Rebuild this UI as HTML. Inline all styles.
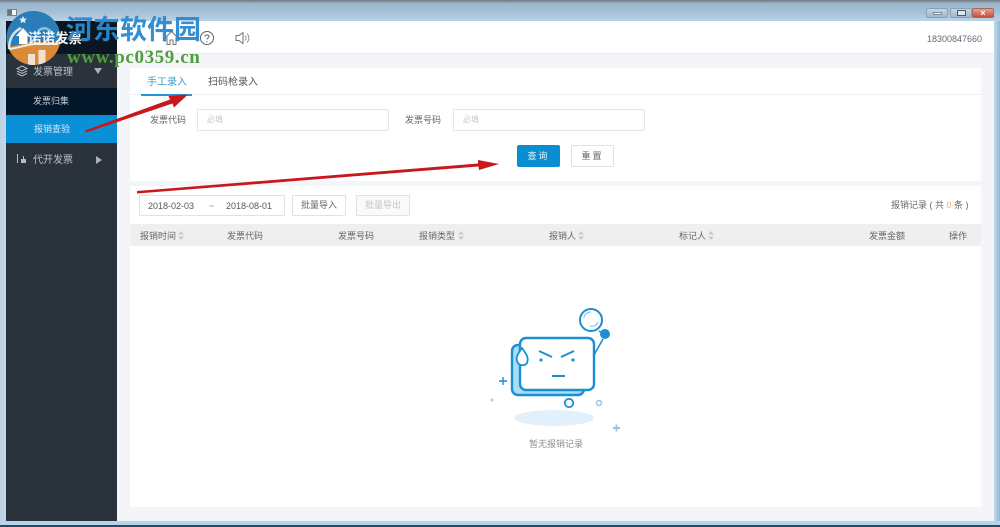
<!DOCTYPE html>
<html lang="zh"><head><meta charset="utf-8"><title>发票</title>
<style>
*{box-sizing:border-box;margin:0;padding:0}
html,body{width:1000px;height:527px;overflow:hidden;background:#bdd4ea;font-family:"Liberation Sans","Noto Sans CJK SC",sans-serif}
.a{position:absolute;white-space:nowrap}
#frame{position:absolute;left:0;top:0;width:1000px;height:527px;background:linear-gradient(90deg,#bcd0e4 0,#c4d8ec 6px,#c4d8ec 994px,#a8cbe6 997px,#8fb8da 1000px);overflow:hidden;filter:blur(.25px)}
#titleb{position:absolute;left:0;top:0;width:1000px;height:21px;background:linear-gradient(180deg,#6f7c88 0,#7d8b98 1.500px,#9ab4cc 3px,#a6c0d8 12px,#bbd2e6 21px)}
#main{position:absolute;left:6px;top:21px;width:988px;height:500px;background:#f3f5f8}
#btm{position:absolute;left:0;top:525px;width:1000px;height:2px;background:#1f5060}
#botb{position:absolute;left:0;top:521px;width:1000px;height:4px;background:#b8d3ee}
#side{position:absolute;left:6px;top:21px;width:111px;height:500px;background:#2a333c}
#head{position:absolute;left:117px;top:21px;width:877px;height:33px;background:#fff;border-bottom:1px solid #e8eaee}
.card{position:absolute;background:#fff}
.t{color:#666;font-size:9px;line-height:12px}
.inp{position:absolute;height:22px;border:1px solid #e2e5ea;border-radius:2px;background:#fff;color:#c4c8ce;font-size:8px;line-height:20px;padding-left:9px}
.btn{position:absolute;text-align:center;font-size:9px;border:1px solid #dfe2e6;background:#fff;color:#666;border-radius:1px}
.sort{position:absolute;width:6px;height:9px}
</style></head><body>
<div id="frame">
<div id="titleb"></div>
<div class="a" style="left:7px;top:9px;width:10px;height:7px;background:#f4f6f6;border:1px solid #78848c"><div style="width:4px;height:5px;background:#5c7a70"></div></div>
<div class="a" style="left:926px;top:8px;width:22px;height:10px;border-radius:2px;border:1px solid #8da0b2;background:linear-gradient(#c6d6e4,#9fb6cc)"><div style="position:absolute;left:6px;top:3px;width:9px;height:3px;background:#eef3f7;border:1px solid #7b8b9a"></div></div>
<div class="a" style="left:950px;top:8px;width:22px;height:10px;border-radius:2px;border:1px solid #8da0b2;background:linear-gradient(#c6d6e4,#9fb6cc)"><div style="position:absolute;left:6px;top:1px;width:9px;height:6px;border:1px solid #4c5a66;background:#dfe8ef"></div></div>
<div class="a" style="left:972px;top:8px;width:22px;height:10px;border-radius:2px;border:1px solid #a0685c;background:linear-gradient(#e6a093,#c94f3a);color:#fff;font-size:9px;line-height:8px;text-align:center;font-weight:bold">×</div>

<div id="main"></div>
<div id="side"></div>
<div class="a" style="left:6px;top:21px;width:111px;height:33px;background:#0a1722"></div>
<div class="a" style="left:6px;top:88px;width:111px;height:28px;background:#02172a"></div>
<div class="a" style="left:6px;top:115px;width:111px;height:28px;background:#0a90d6"></div>
<div id="head"></div>
<div id="botb"></div>

<svg class="a" style="left:0;top:6px" width="70" height="62" viewBox="0 0 70 62">
<defs><clipPath id="c"><circle cx="33.500" cy="32" r="27"/></clipPath></defs>
<circle cx="33.500" cy="32" r="27" fill="#dc8a38"/>
<path d="M6.500 32A27 27 0 0 1 60.500 32C60 34 58 36 55 36H30C22 38 14 40 8 41 7 38 6.500 35 6.500 32Z" fill="#2a7db6"/>
<path d="M9 43C9 33 13 26 21 22" fill="none" stroke="#cfe2ee" stroke-width="2.500"/>
<path d="M9 43C18 42 26 39 34 38H58" fill="none" stroke="#e8eef0" stroke-width="2"/>
<path d="M16 30 23 22 30 30 27.500 30V38H19V30Z" fill="#fff"/>
<path d="M38 25C44 20 50 22 53 30" fill="none" stroke="#8fc0de" stroke-width="2.500"/>
<g clip-path="url(#c)"><rect x="28" y="48" width="7" height="14" fill="#f0e2d0"/><rect x="38.500" y="44" width="7" height="18" fill="#f0e2d0"/></g>
<path d="M23 10l1.200 2.500 2.700.3-2 1.800.6 2.700-2.500-1.400-2.500 1.400.6-2.700-2-1.800 2.700-.3z" fill="#dcecf6"/>
</svg>
<div class="a" style="left:28px;top:30px;color:#f4f8fa;font-size:13.500px;line-height:18px;font-weight:bold">诺诺发票</div>

<div class="a" style="left:66px;top:13px;color:#2a8ad0;font-size:27px;line-height:34px;font-weight:bold;opacity:.95">河东软件园</div>
<div class="a" style="left:67px;top:49px;color:#4f9e3e;font-size:19px;line-height:17px;font-weight:bold;letter-spacing:.6px;font-family:'Liberation Serif',serif">www.pc0359.cn</div>

<svg class="a" style="left:160px;top:27px" width="95" height="22" viewBox="0 0 95 22" fill="none" stroke="#59636d" stroke-width="1">
<path d="M5 11 11.500 4.500 18 11M7 10V17.500H10V13H13V17.500H16V10" stroke="#6c7680"/>
<circle cx="47" cy="11" r="6.500"/><path d="M45 9.500C45 7.500 49 7.500 49 9.500 49 11 47 10.800 47 12.500M47 14v1"/>
<path d="M76 8.500H79L83 5.500V16.500L79 13.500H76Z" stroke="#6c7680"/><path d="M85 8.500C86.500 10 86.500 12 85 13.500M87 6.500C89.500 9 89.500 13 87 15.500" stroke="#8a939c"/>
</svg>
<div class="a" style="left:927px;top:33px;color:#606a74;font-size:9px;line-height:12px">18300847660</div>

<svg class="a" style="left:15px;top:64px" width="14" height="14" viewBox="0 0 14 14" fill="none" stroke="#b6bcc2" stroke-width="1"><path d="M7 2 12 4.500 7 7 2 4.500ZM2 7 7 9.500 12 7M2 9.500 7 12 12 9.500"/></svg>
<div class="a" style="left:33px;top:66px;color:#bcc1c6;font-size:10px;line-height:14px">发票管理</div>
<div class="a" style="left:94px;top:68px;width:0;height:0;border-left:4px solid transparent;border-right:4px solid transparent;border-top:6px solid #aab0b6"></div>
<div class="a" style="left:33px;top:95px;color:#c8ced4;font-size:9px;line-height:12px">发票归集</div>
<div class="a" style="left:34px;top:123px;color:#d6ecf8;font-size:9px;line-height:12px">报销查验</div>
<svg class="a" style="left:15px;top:153px" width="14" height="12" viewBox="0 0 14 12" fill="#b6bcc2"><rect x="2" y="1" width="1" height="9"/><rect x="6" y="6" width="5" height="4"/><rect x="8" y="3" width="1" height="4"/></svg>
<div class="a" style="left:33px;top:154px;color:#bcc1c6;font-size:10px;line-height:14px">代开发票</div>
<div class="a" style="left:96px;top:156px;width:0;height:0;border-top:4px solid transparent;border-bottom:4px solid transparent;border-left:6px solid #aab0b6"></div>

<div class="card" style="left:130px;top:68px;width:851px;height:113px"></div>
<div class="a" style="left:130px;top:94px;width:851px;height:1px;background:#eceef1"></div>
<div class="a" style="left:147px;top:76px;color:#3d9ccf;font-size:10px;line-height:13px">手工录入</div>
<div class="a" style="left:208px;top:76px;color:#555;font-size:10px;line-height:13px">扫码枪录入</div>
<div class="a" style="left:141px;top:94px;width:51px;height:2px;background:#2a95d3"></div>
<div class="a t" style="left:150px;top:114px">发票代码</div>
<div class="inp" style="left:197px;top:109px;width:192px">必填</div>
<div class="a t" style="left:405px;top:114px">发票号码</div>
<div class="inp" style="left:453px;top:109px;width:192px">必填</div>
<div class="btn" style="left:517px;top:145px;width:43px;height:22px;line-height:21px;background:#0a8ed2;border-color:#0a8ed2;color:#e8f6fc;border-radius:2px;letter-spacing:2px">查询</div>
<div class="btn" style="left:571px;top:145px;width:43px;height:22px;line-height:20px;letter-spacing:2px">重置</div>

<div class="card" style="left:130px;top:186px;width:851px;height:321px"></div>
<div class="btn" style="left:139px;top:195px;width:146px;height:21px"></div>
<div class="a" style="left:148px;top:200px;color:#555;font-size:9px;line-height:12px">2018-02-03</div>
<div class="a" style="left:209px;top:200px;color:#888;font-size:9px;line-height:12px">~</div>
<div class="a" style="left:226px;top:200px;color:#555;font-size:9px;line-height:12px">2018-08-01</div>
<div class="btn" style="left:292px;top:195px;width:54px;height:21px;line-height:19px">批量导入</div>
<div class="btn" style="left:356px;top:195px;width:54px;height:21px;line-height:19px;color:#c0c4c8;background:#fafafa">批量导出</div>
<div class="a t" style="left:891px;top:199px">报销记录 ( 共 <span style="color:#e8b070">0</span> 条 )</div>

<div class="a" style="left:130px;top:224px;width:851px;height:22px;background:#efefef"></div>
<div class="a t" style="left:140px;top:230px">报销时间</div>
<div class="a t" style="left:227px;top:230px">发票代码</div>
<div class="a t" style="left:338px;top:230px">发票号码</div>
<div class="a t" style="left:419px;top:230px">报销类型</div>
<div class="a t" style="left:549px;top:230px">报销人</div>
<div class="a t" style="left:679px;top:230px">标记人</div>
<div class="a t" style="left:869px;top:230px">发票金额</div>
<div class="a t" style="left:949px;top:230px">操作</div>
<svg class="sort" style="left:178px;top:231px" viewBox="0 0 6 9" fill="#c6c9cc"><path d="M3 0 6 3.500H0ZM0 5.500H6L3 9Z"/></svg>
<svg class="sort" style="left:458px;top:231px" viewBox="0 0 6 9" fill="#c6c9cc"><path d="M3 0 6 3.500H0ZM0 5.500H6L3 9Z"/></svg>
<svg class="sort" style="left:578px;top:231px" viewBox="0 0 6 9" fill="#c6c9cc"><path d="M3 0 6 3.500H0ZM0 5.500H6L3 9Z"/></svg>
<svg class="sort" style="left:708px;top:231px" viewBox="0 0 6 9" fill="#c6c9cc"><path d="M3 0 6 3.500H0ZM0 5.500H6L3 9Z"/></svg>

<svg class="a" style="left:470px;top:295px" width="170" height="165" viewBox="0 0 170 165" fill="none">
<ellipse cx="84" cy="123" rx="40" ry="8" fill="#e2f0fb"/>
<rect x="42" y="50" width="72" height="50" rx="6" fill="#a9dcf7" stroke="#1b8fd0" stroke-width="2.400"/>
<rect x="50" y="43" width="74" height="52" rx="6" fill="#fff" stroke="#1b8fd0" stroke-width="2.400"/>
<path d="M52 53C47 60 45 63 48 68 50 71 55 71 57 68 59 63 57 60 52 53Z" fill="#fff" stroke="#1b8fd0" stroke-width="1.800"/>
<path d="M69 56 82 62M104 56 91 62M82 81H95" stroke="#1b8fd0" stroke-width="2"/>
<circle cx="71" cy="65" r="1.600" fill="#1b8fd0"/><circle cx="103" cy="65" r="1.600" fill="#1b8fd0"/>
<circle cx="121" cy="25" r="11" fill="#fff" stroke="#1b8fd0" stroke-width="2"/>
<path d="M114 23C114 19 118 17 121 17M120 31C124 32 127 30 128 27" stroke="#8ec8ea" stroke-width="1.200"/>
<path d="M129 36 135 39M133 44 124 60" stroke="#1b8fd0" stroke-width="1.600"/>
<circle cx="135" cy="39" r="5" fill="#1b8fd0"/>
<circle cx="99" cy="108" r="4.200" stroke="#1b8fd0" stroke-width="1.800"/>
<circle cx="129" cy="108" r="2.500" stroke="#9cc2de" stroke-width="1.500"/>
<circle cx="22" cy="105" r="1.400" fill="#a9cde6"/>
<path d="M29 86H37M33 82V90" stroke="#1b8fd0" stroke-width="1.400"/>
<path d="M143 133H150M146.500 129.500V136.500" stroke="#9cc4e2" stroke-width="2"/>
</svg>
<div class="a" style="left:529px;top:438px;color:#8a8f94;font-size:9px;line-height:12px">暂无报销记录</div>

<svg class="a" style="left:0;top:0;pointer-events:none" width="1000" height="527" viewBox="0 0 1000 527" fill="#c8181c">
<path d="M85 130.500 170 99.500 168.500 96 188 94.500 174 107.500 172.500 103.500 86 132.500Z"/>
<path d="M137 191 478 163.500 478 160 499 164 479 170 478.500 166.500 137 193.500Z"/>
</svg>
<div id="btm"></div>
</div>
</body></html>
